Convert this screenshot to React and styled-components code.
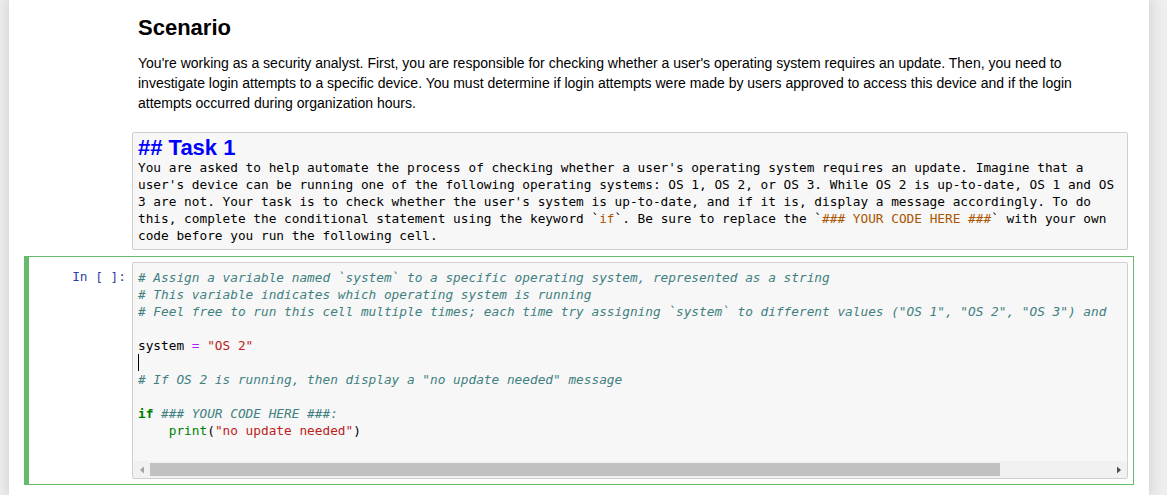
import React from "react"
import styled, { createGlobalStyle } from "styled-components"

const GlobalStyle = createGlobalStyle`
body{
  margin:0;
  background:#eeeeee;
  font-family:"Liberation Sans", Arial, sans-serif;
}
`

const Notebook = styled.div`
width:1140px;
min-height:495px;
margin-left:9px;
box-sizing:border-box;
padding:9px 15px 0 15px;
background:#ffffff;
box-shadow:0 0 12px 1px rgba(87,87,87,0.2);
`

const Cell = styled.div`
display:flex;
box-sizing:border-box;
padding:5px;
border:1px solid ${p => p.selected ? "#66bb6a" : "transparent"};
border-left:5px solid ${p => p.selected ? "#66bb6a" : "transparent"};
margin-top:${p => p.gap || 0}px;
`

const Prompt = styled.div`
width:98px;
flex:none;
box-sizing:border-box;
padding:6px 6px 0 0;
text-align:right;
font-family:"DejaVu Sans Mono", monospace;
font-size:12.78px;
line-height:17px;
color:#303f9f;
`

const Rendered = styled.div`
flex:1;
padding-left:6px;
color:#000;
`

const Heading = styled.h2`
margin:0 0 12px 0;
font-size:22px;
line-height:26px;
font-weight:bold;
`

const Para = styled.p`
margin:0;
font-size:14px;
line-height:20px;
`

const Line = styled.span`
display:block;
white-space:pre;
min-height:${p => p.h || 17}px;
`

const InputArea = styled.div`
flex:1;
min-width:0;
background:#f7f7f7;
border:1px solid #cfcfcf;
border-radius:2px;
`

const MarkdownSource = styled.div`
padding:3px 5px 5px 5px;
font-family:"DejaVu Sans Mono", monospace;
font-size:12.78px;
line-height:17px;
color:#000;
`

const MdHeader = styled.div`
font-family:"Liberation Sans", Arial, sans-serif;
font-size:22px;
line-height:23px;
font-weight:bold;
color:#0000ff;
`

const MdCode = styled.span`
color:#aa5500;
`

const CodeLines = styled.div`
overflow:hidden;
margin-right:16px;
padding:6px 0 22px 5px;
font-family:"DejaVu Sans Mono", monospace;
font-size:12.78px;
line-height:17px;
color:#000;
`

const Comment = styled.span`
color:#408080;
font-style:italic;
`

const Keyword = styled.span`
color:#008000;
font-weight:bold;
`

const Builtin = styled.span`
color:#008000;
`

const Op = styled.span`
color:#aa22ff;
`

const Str = styled.span`
color:#ba2121;
`

const Cursor = styled.span`
display:inline-block;
width:0;
height:17px;
border-left:1px solid #000;
vertical-align:top;
`

const ScrollBar = styled.div`
display:flex;
align-items:center;
height:17px;
background:#f1f1f1;
`

const ArrowButton = styled.div`
width:17px;
height:17px;
flex:none;
display:flex;
align-items:center;
justify-content:center;
`

const Track = styled.div`
flex:1;
height:17px;
display:flex;
align-items:center;
`

const Thumb = styled.div`
height:13px;
width:88.5%;
background:#c1c1c1;
`

const Arrow = ({ dir, color }) => (
  <svg width="8" height="8" viewBox="0 0 8 8">
    {dir === "left"
      ? <polygon points="6,0.5 6,7.5 2,4" fill={color} />
      : <polygon points="2,0.5 2,7.5 6,4" fill={color} />}
  </svg>
)

const App = () => {
  return (
    <>
      <GlobalStyle />
      <Notebook>
        <Cell>
          <Prompt />
          <Rendered>
            <Heading>Scenario</Heading>
            <Para>
              <Line h={20}>You're working as a security analyst. First, you are responsible for checking whether a user's operating system requires an update. Then, you need to</Line>
              <Line h={20}>investigate login attempts to a specific device. You must determine if login attempts were made by users approved to access this device and if the login</Line>
              <Line h={20}>attempts occurred during organization hours.</Line>
            </Para>
          </Rendered>
        </Cell>

        <Cell gap={7}>
          <Prompt />
          <InputArea>
            <MarkdownSource>
              <MdHeader>## Task 1</MdHeader>
              <Line>You are asked to help automate the process of checking whether a user's operating system requires an update. Imagine that a</Line>
              <Line>user's device can be running one of the following operating systems: OS 1, OS 2, or OS 3. While OS 2 is up-to-date, OS 1 and OS</Line>
              <Line>3 are not. Your task is to check whether the user's system is up-to-date, and if it is, display a message accordingly. To do</Line>
              <Line>this, complete the conditional statement using the keyword `<MdCode>if</MdCode>`. Be sure to replace the `<MdCode>### YOUR CODE HERE ###</MdCode>` with your own</Line>
              <Line>code before you run the following cell.</Line>
            </MarkdownSource>
          </InputArea>
        </Cell>

        <Cell selected>
          <Prompt>In&nbsp;[&nbsp;]:</Prompt>
          <InputArea>
            <CodeLines>
              <Line><Comment># Assign a variable named `system` to a specific operating system, represented as a string</Comment></Line>
              <Line><Comment># This variable indicates which operating system is running</Comment></Line>
              <Line><Comment># Feel free to run this cell multiple times; each time try assigning `system` to different values ("OS 1", "OS 2", "OS 3") and observe the output</Comment></Line>
              <Line> </Line>
              <Line>system <Op>=</Op> <Str>"OS 2"</Str></Line>
              <Line><Cursor /></Line>
              <Line><Comment># If OS 2 is running, then display a "no update needed" message</Comment></Line>
              <Line> </Line>
              <Line><Keyword>if</Keyword> <Comment>### YOUR CODE HERE ###:</Comment></Line>
              <Line>    <Builtin>print</Builtin>(<Str>"no update needed"</Str>)</Line>
            </CodeLines>
            <ScrollBar>
              <ArrowButton><Arrow dir="left" color="#a3a3a3" /></ArrowButton>
              <Track><Thumb /></Track>
              <ArrowButton><Arrow dir="right" color="#505050" /></ArrowButton>
            </ScrollBar>
          </InputArea>
        </Cell>
      </Notebook>
    </>
  )
}

export default App
